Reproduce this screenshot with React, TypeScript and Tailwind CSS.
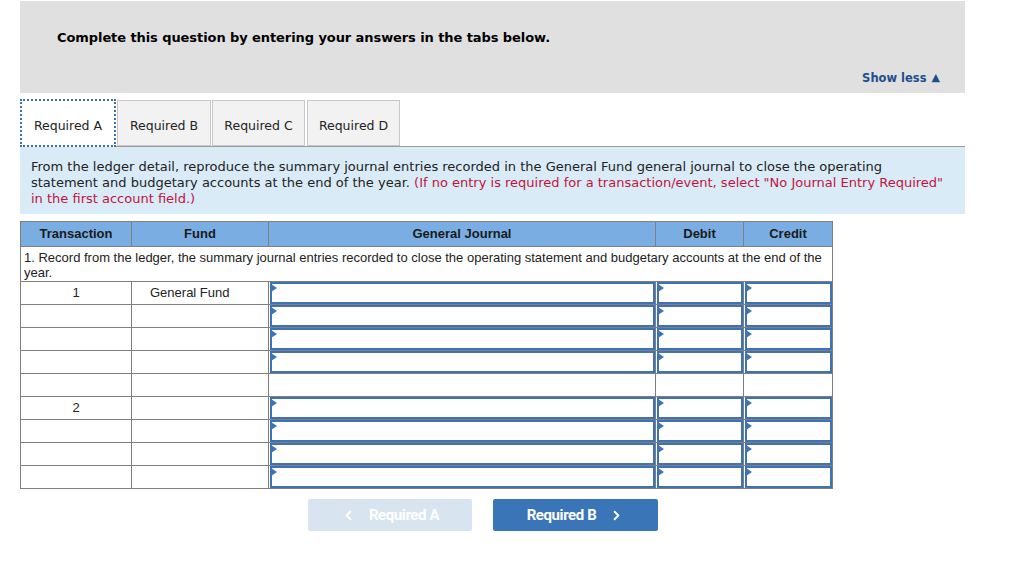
import React from "react";
import { ChevronLeft, ChevronRight } from "lucide-react";

const verdana = { fontFamily: '"DejaVu Sans", Verdana, sans-serif' };

function InputCell() {
  return (
    <td className="border border-[#7f7f7f] p-0 h-[23px] relative">
      <div className="absolute left-[1px] right-0 top-0 bottom-0 border-2 border-[#3f72b5] bg-white" />
      <div className="absolute left-[2px] top-[2px] w-0 h-0 border-y-[4px] border-y-transparent border-l-[6px] border-l-[#3f72b5]" />
    </td>
  );
}

function PlainCell({ children }: { children?: React.ReactNode }) {
  return (
    <td className="border border-[#7f7f7f] h-[23px] p-0 text-center text-[13px] text-[#222]">{children}</td>
  );
}

function InputRow({ a, b }: { a?: string; b?: string }) {
  return (
    <tr>
      <PlainCell>{a}</PlainCell>
      <td className="border border-[#7f7f7f] h-[23px] p-0 text-[13px] text-[#222] pl-[18px]">{b}</td>
      <InputCell />
      <InputCell />
      <InputCell />
    </tr>
  );
}

export default function App() {
  return (
    <div className="w-[1022px] h-[566px] bg-white pt-[1px] pl-[20px]" style={verdana}>
      <div className="w-[945px]">
        <div className="bg-[#e0e0e0] h-[92px] relative">
          <div className="pt-[27px] pl-[37px] text-[13px] font-bold text-black tracking-[-0.08px]">
            Complete this question by entering your answers in the tabs below.
          </div>
          <div className="absolute right-[25px] top-[69px] text-[11.5px] font-bold text-[#1d4f8c] flex items-center gap-[5px]">
            <span>Show less</span>
            <span className="text-[11px]">▲</span>
          </div>
        </div>
        <div className="h-[7px]" />
        <div className="flex items-end border-b border-[#9a9a9a] h-[47px]">
          <div className="w-[96px] h-[48px] mb-[-1px] pt-[6px] bg-white border-2 border-dotted border-[#3c6fb0] flex items-center justify-center text-[12.5px] text-[#222]">
            Required A
          </div>
          <div className="w-[94px] h-[46px] ml-[1px] pt-[6px] bg-[#f2f2f2] border border-[#c8c8c8] flex items-center justify-center text-[12.5px] text-[#222]">
            Required B
          </div>
          <div className="w-[93px] h-[46px] ml-[1px] pt-[6px] bg-[#f2f2f2] border border-[#c8c8c8] flex items-center justify-center text-[12.5px] text-[#222]">
            Required C
          </div>
          <div className="w-[93px] h-[46px] ml-[2px] pt-[6px] bg-[#f2f2f2] border border-[#c8c8c8] flex items-center justify-center text-[12.5px] text-[#222]">
            Required D
          </div>
        </div>
        <div className="bg-[#daebf8] h-[67px] pl-[11px] pt-[12px] text-[13px] leading-[16px] text-[#222] whitespace-nowrap">
          From the ledger detail, reproduce the summary journal entries recorded in the General Fund general journal to close the operating
          <br />
          statement and budgetary accounts at the end of the year.{" "}
          <span className="text-[#c0143c]">
            (If no entry is required for a transaction/event, select "No Journal Entry Required"
            <br />
            in the first account field.)
          </span>
        </div>
      </div>
      <div className="h-[7px]" />
      <table
        className="border-collapse table-fixed w-[812px]"
        style={{ fontFamily: '"Liberation Sans", Arial, sans-serif' }}
      >
        <colgroup>
          <col className="w-[111px]" />
          <col className="w-[137px]" />
          <col className="w-[387px]" />
          <col className="w-[88px]" />
          <col className="w-[89px]" />
        </colgroup>
        <thead>
          <tr className="bg-[#7aaee3] text-[13px] text-[#1a1a1a] h-[25px]">
            <th className="border border-[#7f7f7f] font-bold">Transaction</th>
            <th className="border border-[#7f7f7f] font-bold">Fund</th>
            <th className="border border-[#7f7f7f] font-bold">General Journal</th>
            <th className="border border-[#7f7f7f] font-bold">Debit</th>
            <th className="border border-[#7f7f7f] font-bold">Credit</th>
          </tr>
        </thead>
        <tbody>
          <tr>
            <td colSpan={5} className="border border-[#7f7f7f] h-[35px] align-top pl-[3px] pt-[3px] pr-[6px] text-[13px] leading-[15px] text-[#222]">
              1. Record from the ledger, the summary journal entries recorded to close the operating statement and budgetary accounts at the end of the year.
            </td>
          </tr>
          <InputRow a="1" b="General Fund" />
          <InputRow />
          <InputRow />
          <InputRow />
          <tr>
            <PlainCell />
            <PlainCell />
            <PlainCell />
            <PlainCell />
            <PlainCell />
          </tr>
          <InputRow a="2" />
          <InputRow />
          <InputRow />
          <InputRow />
        </tbody>
      </table>
      <div className="flex gap-[21px] pl-[288px] pt-[10px]" style={{ fontFamily: 'Roboto, sans-serif' }}>
        <div className="w-[164px] h-[32px] rounded-[2px] bg-[#d9e4f1] text-white text-[15px] font-bold flex items-center justify-center gap-[13px]">
          <ChevronLeft size={15} strokeWidth={3} />
          <span className="tracking-[-0.4px]">Required A</span>
        </div>
        <div className="w-[165px] h-[32px] rounded-[2px] bg-[#3a75b8] text-white text-[15px] font-bold flex items-center justify-center gap-[13px]">
          <span className="tracking-[-0.4px]">Required B</span>
          <ChevronRight size={15} strokeWidth={3} />
        </div>
      </div>
    </div>
  );
}
